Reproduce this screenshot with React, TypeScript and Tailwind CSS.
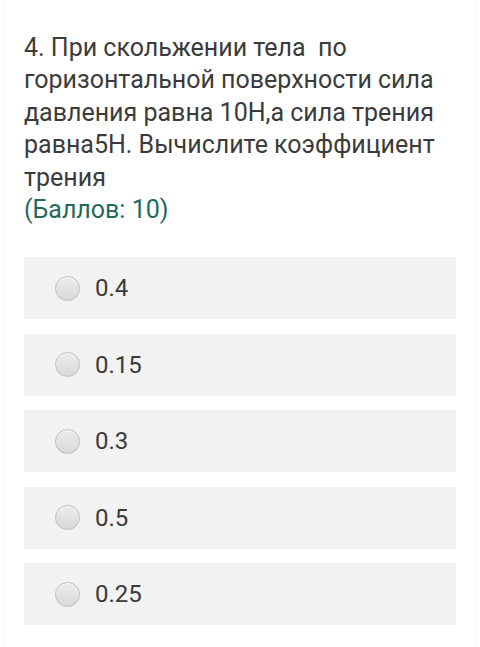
import React from "react";

const options = ["0.4", "0.15", "0.3", "0.5", "0.25"];

const Radio: React.FC = () => (
  <span className="block h-[25px] w-[25px] shrink-0 rounded-full border border-[#bdbdbd] bg-gradient-to-b from-[#ececec] to-[#d9d9d9] shadow-[inset_0_1px_1px_rgba(255,255,255,0.8)]" />
);

const App: React.FC = () => {
  return (
    <div
      className="min-h-[647px] w-[480px] bg-white"
      style={{ fontFamily: "Roboto, 'Noto Sans', sans-serif" }}
    >
      <div className="min-h-[647px] border-x border-[#f4f4f4] mx-[3px] px-[20px] pt-[32px] pb-[20px]">
        <div className="text-[25px] leading-[32.4px] text-[#3b3b3b]">
          <p>
            4. При скольжении тела&nbsp; по горизонтальной поверхности сила
            давления равна 10Н,а сила трения равна5Н. Вычислите коэффициент
            трения
          </p>
          <p className="text-[#1e6b5b]">(Баллов: 10)</p>
        </div>

        <div className="mt-[31px] flex flex-col gap-[14.5px]">
          {options.map((o) => (
            <label
              key={o}
              className="flex h-[62px] items-center gap-[15px] bg-[#f2f2f2] pl-[31px]"
            >
              <Radio />
              <span className="text-[24px] text-[#3a3a3a]">{o}</span>
            </label>
          ))}
        </div>
      </div>
    </div>
  );
};

export default App;
